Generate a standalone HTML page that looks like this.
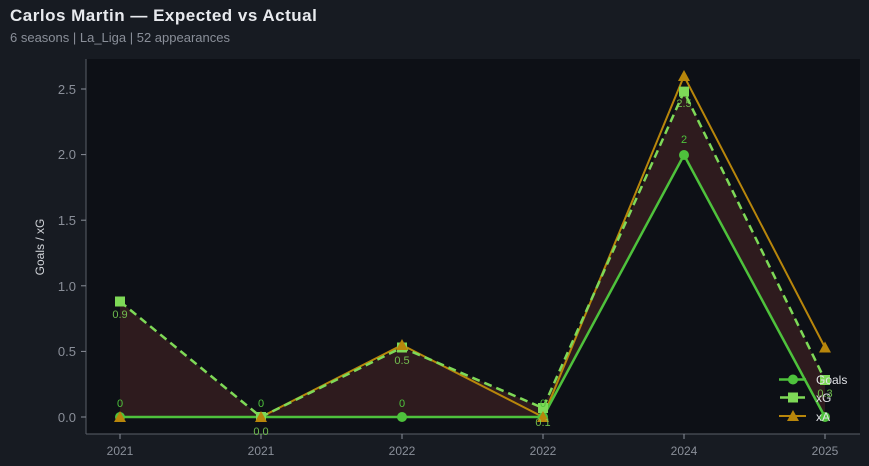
<!DOCTYPE html>
<html><head><meta charset="utf-8"><style>
html,body{margin:0;padding:0;background:#171b22;width:869px;height:466px;overflow:hidden;font-family:"Liberation Sans",sans-serif}
.t{position:absolute;left:10px;top:6px;font-size:17px;font-weight:bold;color:#e8eaee;letter-spacing:0.5px}
.s{position:absolute;left:10px;top:30px;font-size:13px;color:#8a8f99}
svg{position:absolute;left:0;top:0}
</style></head><body>
<div class="t">Carlos Martin — Expected vs Actual</div>
<div class="s">6 seasons | La_Liga | 52 appearances</div>
<svg width="869" height="466" font-family="Liberation Sans, sans-serif">
<rect x="86" y="59" width="774" height="375" fill="#0d1016"/>
<line x1="86" y1="59" x2="86" y2="434" stroke="#5a5f68"/>
<line x1="86" y1="434" x2="860" y2="434" stroke="#5a5f68"/>
<g stroke="#8a8f99">
<line x1="81" y1="417" x2="86" y2="417"/><line x1="81" y1="351.4" x2="86" y2="351.4"/><line x1="81" y1="285.8" x2="86" y2="285.8"/><line x1="81" y1="220.2" x2="86" y2="220.2"/><line x1="81" y1="154.6" x2="86" y2="154.6"/><line x1="81" y1="89" x2="86" y2="89"/>
<line x1="120" y1="434" x2="120" y2="439"/><line x1="261" y1="434" x2="261" y2="439"/><line x1="402" y1="434" x2="402" y2="439"/><line x1="543" y1="434" x2="543" y2="439"/><line x1="684" y1="434" x2="684" y2="439"/><line x1="825" y1="434" x2="825" y2="439"/>
</g>
<g fill="#8a8f99" font-size="13" text-anchor="end">
<text x="76" y="422">0.0</text><text x="76" y="356">0.5</text><text x="76" y="291">1.0</text><text x="76" y="225">1.5</text><text x="76" y="159">2.0</text><text x="76" y="94">2.5</text>
</g>
<g fill="#8a8f99" font-size="12" text-anchor="middle">
<text x="120" y="455">2021</text><text x="261" y="455">2021</text><text x="402" y="455">2022</text><text x="543" y="455">2022</text><text x="684" y="455">2024</text><text x="825" y="455">2025</text>
</g>
<text transform="translate(44,247) rotate(-90)" fill="#d0d3d8" font-size="12" text-anchor="middle">Goals / xG</text>
<polygon points="120,301.5 261,417 402,347.5 543,408 684,91.6 825,380 825,417 684,155 543,417 402,417 261,417 120,417" fill="#2e1b1e"/>
<polyline points="120,417 261,417 402,345 543,417 684,76 825,347.5" fill="none" stroke="#b8860b" stroke-width="2"/>
<polyline points="120,301.5 261,417 402,347.5 543,408 684,91.6 825,380" fill="none" stroke="#7ed957" stroke-width="2.5" stroke-dasharray="8,5"/>
<polyline points="120,417 261,417 402,417 543,417 684,155 825,417" fill="none" stroke="#4ec23c" stroke-width="2.5"/>
<g fill="#4ec23c"><circle cx="120" cy="417" r="5"/><circle cx="261" cy="417" r="5"/><circle cx="402" cy="417" r="5"/><circle cx="543" cy="417" r="5"/><circle cx="684" cy="155" r="5"/><circle cx="825" cy="417" r="5"/></g>
<g fill="#7ed957"><rect x="115" y="296.5" width="10" height="10"/><rect x="256" y="412" width="10" height="10"/><rect x="397" y="342.5" width="10" height="10"/><rect x="538" y="403" width="10" height="10"/><rect x="679" y="86.6" width="10" height="10"/><rect x="820" y="375" width="10" height="10"/></g>
<g fill="#b8860b"><polygon points="120,411 126,422 114,422"/><polygon points="261,411 267,422 255,422"/><polygon points="402,339 408,350 396,350"/><polygon points="543,411 549,422 537,422"/><polygon points="684,70 690,81 678,81"/><polygon points="825,341.5 831,352.5 819,352.5"/></g>
<g fill="#4ec23c" font-size="11" text-anchor="middle">
<text x="120" y="407">0</text><text x="261" y="407">0</text><text x="402" y="407">0</text><text x="543" y="407">0</text><text x="684" y="143">2</text>
</g>
<g fill="#7ed957" font-size="11" text-anchor="middle" opacity="0.85">
<text x="120" y="318">0.9</text><text x="261" y="435">0.0</text><text x="402" y="364">0.5</text><text x="543" y="426">0.1</text><text x="684" y="107">2.5</text><text x="825" y="397">0.3</text>
</g>
<g>
<line x1="779" y1="379.5" x2="806" y2="379.5" stroke="#4ec23c" stroke-width="2.5"/><circle cx="793" cy="379.5" r="5" fill="#4ec23c"/>
<line x1="780" y1="397.5" x2="805" y2="397.5" stroke="#7ed957" stroke-width="2.5"/><rect x="788" y="392.5" width="10" height="10" fill="#7ed957"/>
<line x1="779" y1="416" x2="806" y2="416" stroke="#b8860b" stroke-width="2"/><polygon points="793,410 799,421 787,421" fill="#b8860b"/>
<g fill="#e0e2e6" font-size="12"><text x="816" y="384">Goals</text><text x="816" y="402">xG</text><text x="816" y="421">xA</text></g>
</g>
</svg>
</body></html>
